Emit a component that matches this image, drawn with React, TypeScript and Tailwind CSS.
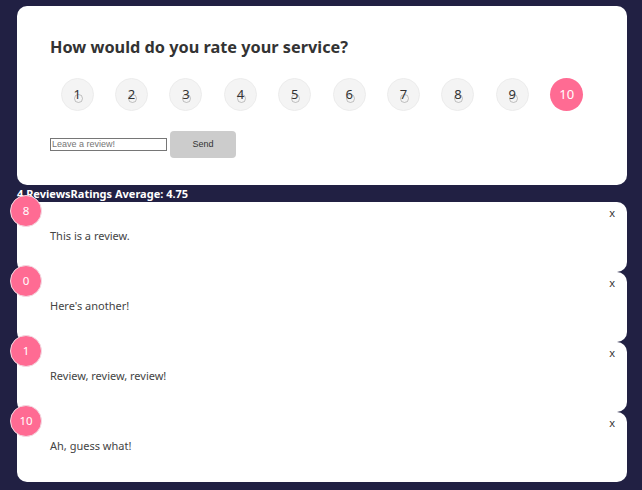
import React from "react";

const reviews = [
  { rating: 8, text: "This is a review." },
  { rating: 0, text: "Here's another!" },
  { rating: 1, text: "Review, review, review!" },
  { rating: 10, text: "Ah, guess what!" },
];

export default function App() {
  return (
    <div className="min-h-[490px] w-[642px] bg-[#212043] pt-[6px] pb-[8px] font-['Noto_Sans',sans-serif]">
      <div className="ml-[17px] w-[610px] rounded-[10px] bg-white pl-[33px] pr-[33px] pt-[29px] pb-[27px]">
        <h1 className="text-[16.3px] font-bold leading-[24px] text-[#333]">
          How would do you rate your service?
        </h1>
        <div className="mt-[19px] flex justify-around">
          {[1, 2, 3, 4, 5, 6, 7, 8, 9, 10].map((n) => (
            <div
              key={n}
              className={
                n === 10
                  ? "relative flex h-[33px] w-[33px] items-center justify-center rounded-full bg-[#ff6b93] text-[13px] text-white"
                  : "relative flex h-[33px] w-[33px] items-center justify-center rounded-full border border-[#ececec] bg-[#f4f4f4] text-[13px] text-[#333]"
              }
            >
              {n !== 10 && (
                <span className="absolute left-[12px] top-[15px] h-[9px] w-[9px] rounded-full border border-[#9a9a9a] opacity-60" />
              )}
              <span className="relative leading-none">{n}</span>
            </div>
          ))}
        </div>
        <div className="mt-[20px] flex items-center gap-[3px]">
          <input
            placeholder="Leave a review!"
            className="h-[13px] w-[117px] border border-[#767676] px-[1px] font-['Liberation_Sans',sans-serif] text-[9px] text-[#333] placeholder:text-[#757575]"
          />
          <button className="h-[27px] w-[66px] rounded-[4px] bg-[#cccccc] font-['Liberation_Sans',sans-serif] text-[9px] text-[#333]">
            Send
          </button>
        </div>
      </div>
      <div className="ml-[17px] flex h-[17px] items-center text-[11px] font-bold leading-none text-white">
        <span>4 Reviews</span>
        <span>Ratings Average: 4.75</span>
      </div>
      <div className="ml-[17px] w-[610px]">
        {reviews.map((r, i) => (
          <div key={i} className="relative h-[70px] rounded-[10px] bg-white pl-[33px]">
            <div className="absolute left-[-7px] top-[-7px] flex h-[32px] w-[32px] items-center justify-center rounded-full border border-[#f3dbe3] bg-[#ff6b93] text-[11.5px] text-white">
              {r.rating}
            </div>
            <div className="absolute right-[12px] top-[3px] text-[11px] text-[#333]">x</div>
            <div className="pt-[27px] text-[11px] leading-[14px] text-[#444]">{r.text}</div>
          </div>
        ))}
      </div>
    </div>
  );
}
